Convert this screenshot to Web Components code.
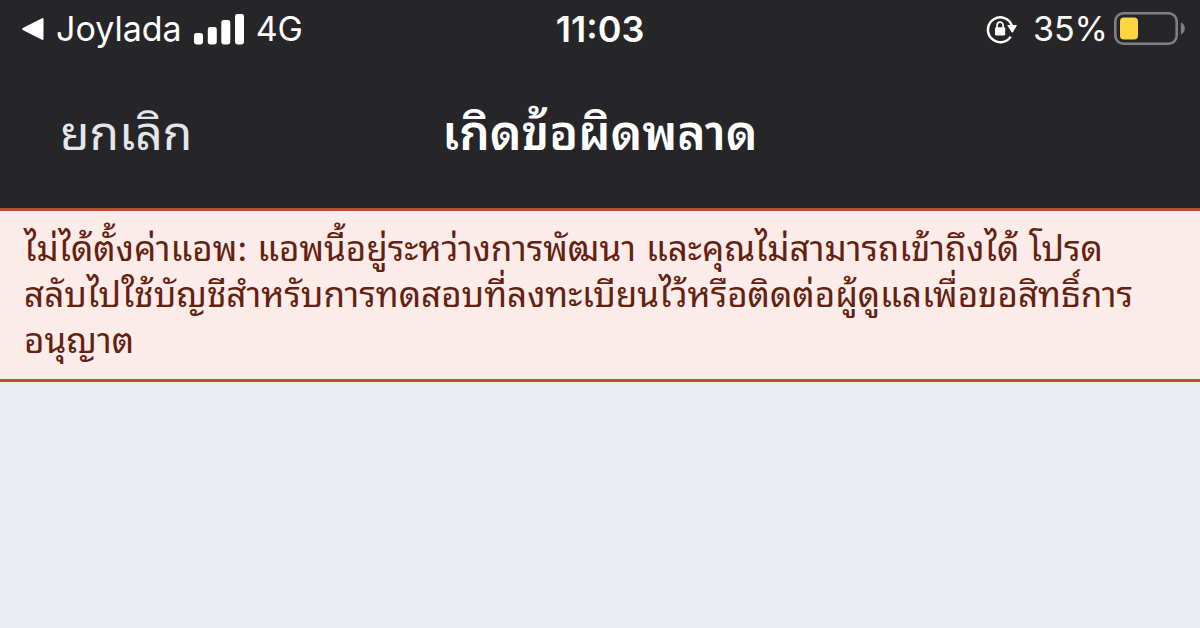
<!DOCTYPE html>
<html lang="th">
<head>
<meta charset="utf-8">
<meta name="viewport" content="width=device-width, initial-scale=1">
<title>เกิดข้อผิดพลาด</title>
<style>
html, body { margin: 0; min-height: 100%; }
body { background: #eaedf2; font-family: Inter, "Noto Sans Thai Looped", Loma, "Noto Sans Thai", "Noto Sans", sans-serif; }
</style>
</head>
<body>
<status-bar>
  <span slot="app">Joylada</span>
  <span slot="network">4G</span>
  <span slot="time">11:03</span>
  <span slot="battery">35%</span>
</status-bar>
<nav-bar><span slot="action">ยกเลิก</span>เกิดข้อผิดพลาด</nav-bar>
<error-banner>ไม่ได้ตั้งค่าแอพ: แอพนี้อยู่ระหว่างการพัฒนา และคุณไม่สามารถเข้าถึงได้ โปรดสลับไปใช้บัญชีสำหรับการทดสอบที่ลงทะเบียนไว้หรือติดต่อผู้ดูแลเพื่อขอสิทธิ์การอนุญาต</error-banner>
<script>
const define = (name, html) => customElements.define(name, class extends HTMLElement {
  constructor() {
    super();
    this.attachShadow({ mode: 'open' }).innerHTML = html;
  }
});

define('signal-bars', `
<style>:host { display: block; } svg { display: block; }</style>
<svg width="50" height="32" viewBox="0 0 50 32" fill="#fff" aria-hidden="true">
  <rect x="0" y="20" width="9" height="11.5" rx="2.4"/>
  <rect x="13.8" y="14" width="9" height="17.5" rx="2.4"/>
  <rect x="27.3" y="7" width="9" height="24.5" rx="2.4"/>
  <rect x="41" y="1" width="9" height="30.5" rx="2.4"/>
</svg>`);

define('rotation-lock', `
<style>:host { display: block; } svg { display: block; }</style>
<svg width="32" height="32" viewBox="0 0 32 32" aria-hidden="true">
  <path d="M25.7 23.6A12.4 12.4 0 1 1 27 12.6" fill="none" stroke="#fff" stroke-width="2.5"/>
  <path d="M22.9 12h8.4q.9 0 .4.8l-3.8 6.4q-.6.8-1.2 0l-4.2-6.4q-.5-.8.4-.8z" fill="#fff"/>
  <rect x="10" y="14.2" width="10.2" height="8.4" rx="1.4" fill="#fff"/>
  <path d="M12.1 15v-2.9a3 3 0 0 1 6 0V15" fill="none" stroke="#fff" stroke-width="1.7"/>
</svg>`);

define('battery-level', `
<style>:host { display: block; } svg { display: block; }</style>
<svg width="72" height="34" viewBox="0 0 72 34" aria-hidden="true">
  <rect x="1.3" y="1.3" width="61.4" height="30.4" rx="8.2" fill="none" stroke="#808083" stroke-width="2.6"/>
  <rect x="6" y="5.4" width="18" height="22" rx="4" fill="#fbd63f"/>
  <path d="M66.8 10.6q4 1.7 4 5.9t-4 5.9z" fill="#808083"/>
</svg>`);

define('status-bar', `
<style>
:host { display: grid; grid-template-columns: 1fr auto 1fr; align-items: center; height: 58px; padding: 0 14px; background: #262628; color: #fff; font-size: 34px; line-height: 44px; }
.side, a { display: flex; align-items: center; gap: 12px; }
.start { padding-left: 6px; }
.end { justify-content: flex-end; gap: 16px; }
.charge { display: flex; align-items: center; gap: 6px; }
.time { font-size: 36px; font-weight: 600; }
a { color: inherit; text-decoration: none; }
svg { display: block; }
</style>
<div class="side start">
  <a href="#"><svg width="24" height="26" viewBox="0 0 24 26" aria-hidden="true"><path d="M2.8 12L22 2.2q1.5-.7 1.5 1v19.6q0 1.7-1.5 1L2.8 14Q1 13 2.8 12z" fill="#fff"/></svg><slot name="app"></slot></a>
  <signal-bars></signal-bars>
  <slot name="network"></slot>
</div>
<div class="time"><slot name="time"></slot></div>
<div class="side end">
  <rotation-lock></rotation-lock>
  <div class="charge"><slot name="battery"></slot><battery-level></battery-level></div>
</div>`);

define('nav-bar', `
<style>
:host { display: grid; grid-template-columns: 1fr auto 1fr; align-items: center; height: 150px; padding: 0 60px; background: #262628; color: #fff; font-size: 48px; line-height: 72px; }
button { padding: 0; border: 0; background: none; font: inherit; color: #e4e6eb; cursor: pointer; }
h1 { margin: 0; font-size: inherit; font-weight: 600; }
</style>
<div><button type="button"><slot name="action"></slot></button></div>
<h1><slot></slot></h1>`);

define('error-banner', `
<style>
:host { display: block; padding: 14px 48px 16px 24px; border: solid #bd4a31; border-width: 3px 0; background: #fbebe9; color: #64210f; font-size: 35px; line-height: 46px; }
</style>
<div role="alert"><slot></slot></div>`);
</script>
</body>
</html>
